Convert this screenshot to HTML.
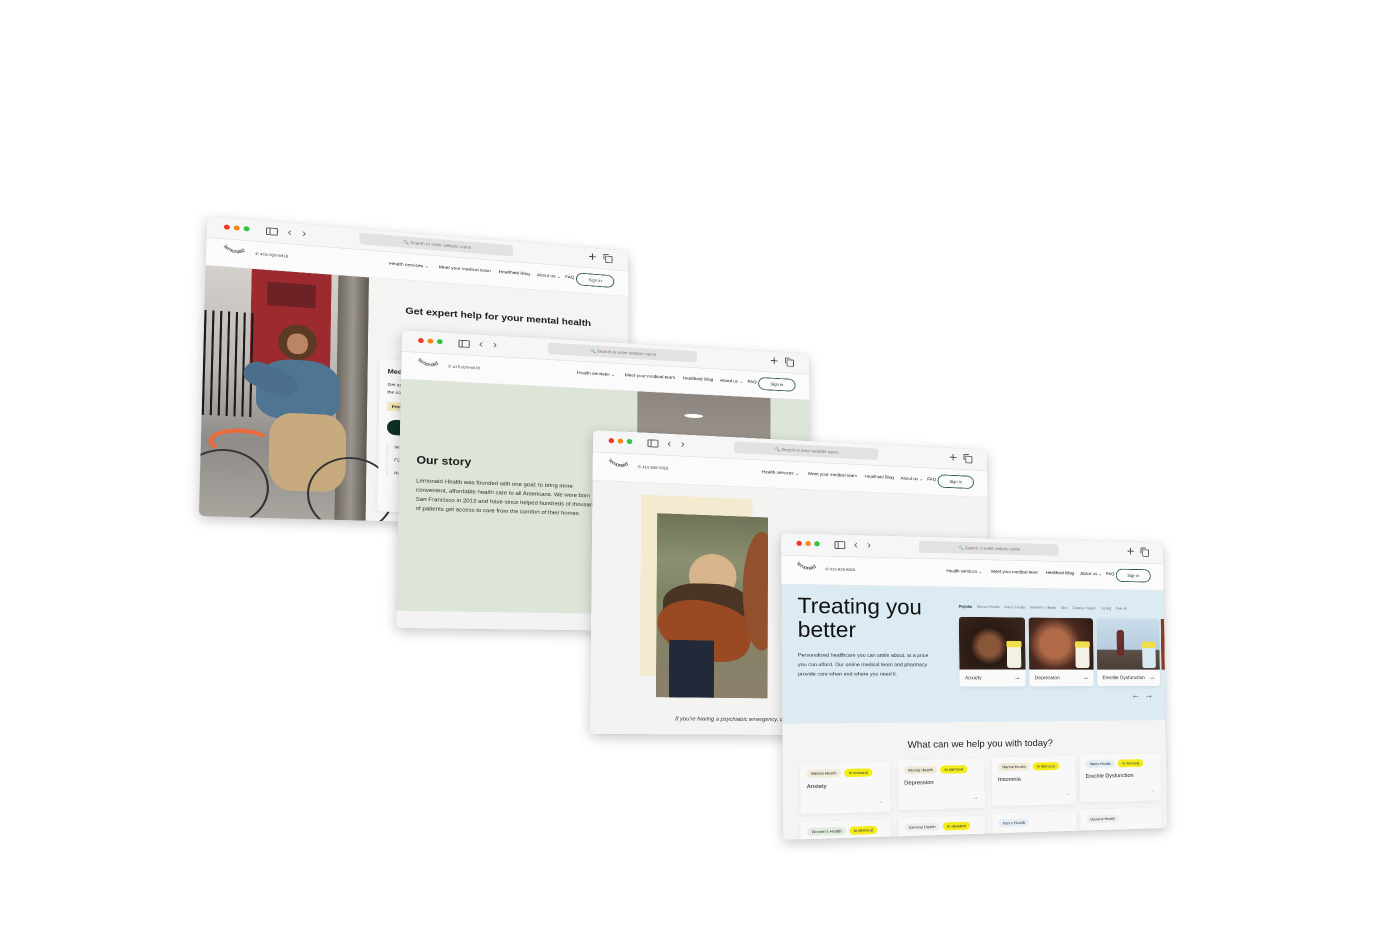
<!DOCTYPE html>
<html><head><meta charset="utf-8">
<style>
html,body{margin:0;padding:0;background:#fff;width:1400px;height:933px;overflow:hidden;font-family:"Liberation Sans",sans-serif;}
.win{position:absolute;left:0;top:0;width:1280px;height:1000px;transform-origin:0 0;border-radius:16px;overflow:hidden;background:#f4f4f3;box-shadow:0 12px 40px rgba(0,0,0,.22),0 0 0 1px rgba(0,0,0,.06);}
.bar{position:absolute;left:0;top:0;width:1280px;height:72px;background:#f6f6f6;border-bottom:2px solid #dcdcdc;}
.dot{position:absolute;top:24px;width:17px;height:17px;border-radius:50%;}
.d1{left:48px;background:#f23a2e}.d2{left:76px;background:#f7871c}.d3{left:104px;background:#2ec43f}
.side{position:absolute;left:168px;top:22px;width:28px;height:20px;border:3px solid #555;border-radius:4px;}
.side:before{content:"";position:absolute;left:7px;top:0;width:3px;height:20px;background:#555}
.chev{position:absolute;top:12px;font-size:36px;color:#555;line-height:40px}
.url{position:absolute;left:440px;top:14px;width:470px;height:40px;background:#e2e2e2;border-radius:10px;font-size:14px;color:#777;text-align:center;line-height:40px}
.plus{position:absolute;left:1150px;top:6px;font-size:46px;color:#444;line-height:50px}
.copy{position:absolute;left:1205px;top:24px;width:18px;height:20px;border:3px solid #555;border-radius:4px}
.copy:after{content:"";position:absolute;left:-9px;top:-9px;width:16px;height:18px;border-left:3px solid #555;border-top:3px solid #555;border-radius:4px 0 0 0}
.nav{position:absolute;left:0;top:74px;width:1280px;height:92px;background:#fbfbfb;border-bottom:2px solid #e7e7e7;}
.logo{position:absolute;left:40px;top:8px}
.phone{position:absolute;left:138px;top:34px;font-size:13px;color:#444}
.nl{position:absolute;top:30px;font-size:15px;color:#222}
.sign{position:absolute;left:1110px;top:20px;width:118px;height:40px;border:3px solid #2b5a47;border-radius:24px;font-size:14px;color:#1c3b2f;text-align:center;line-height:40px}
.content{position:absolute;left:0;top:168px;width:1280px;height:832px;overflow:hidden}
.tag{display:inline-block;padding:6px 14px;border-radius:16px;font-size:13px;color:#333;margin-right:10px}
.g{background:#f1ecd9}.y{background:#f4ec1a}.b{background:#e3eef6}.gr{background:#e2ebe0}.n{background:#eeeeec}
.hc{position:absolute;width:285px;height:165px;background:#f8f8f8;border-radius:8px;box-shadow:0 4px 16px rgba(0,0,0,.06);padding:20px 20px;box-sizing:border-box}
.hc .t{font-size:19px;color:#222;margin-top:18px}
.hc .ar{position:absolute;right:22px;bottom:24px;color:#3a7fd0;font-size:20px}
.pc{position:absolute;top:100px;width:222px;height:235px;background:#fafafa;border-radius:10px;overflow:hidden;box-shadow:0 4px 14px rgba(0,0,0,.08)}
.pc .im{height:178px;position:relative}
.pc .lb{font-size:17px;color:#333;padding:18px 18px;position:relative}
.pc .lb span{position:absolute;right:16px;top:12px;font-size:24px}
.jar{position:absolute;right:14px;bottom:6px;width:48px;height:78px;background:#f3f1e6;border-radius:8px}
.jar:before{content:"";position:absolute;left:-2px;top:-14px;width:52px;height:22px;background:#f1de4e;border-radius:6px}
</style></head>
<body>

<!-- WINDOW 1 -->
<div class="win" id="w1" style="background:#f4f4f3">
  <div class="bar"><div class="dot d1"></div><div class="dot d2"></div><div class="dot d3"></div><div class="side"></div><div class="chev" style="left:230px">‹</div><div class="chev" style="left:272px">›</div><div class="url">🔍 Search or enter website name</div><div class="plus">+</div><div class="copy"></div></div>
  <div class="nav"><svg class="logo" width="90" height="60" viewBox="0 0 90 60"><path id="a1" d="M8,18 Q45,55 82,18" fill="none"/><text font-size="17" font-family="Liberation Sans" fill="#222"><textPath href="#a1">lemonaid</textPath></text></svg><div class="phone">✆ 415-926-5818</div>
  <div class="nl" style="left:530px">Health services ⌄</div><div class="nl" style="left:680px">Meet your medical team</div><div class="nl" style="left:865px">Healthaid Blog</div><div class="nl" style="left:985px">About us ⌄</div><div class="nl" style="left:1075px">FAQ</div><div class="sign">Sign in</div></div>
  <div class="content">
    <div style="position:absolute;left:0;top:0;width:470px;height:832px;background:linear-gradient(180deg,#d4d0cc 0%,#bdb8b3 40%,#8e8b88 70%,#a9a49e 100%)"></div>
    <div style="position:absolute;left:130px;top:0;width:230px;height:330px;background:#9c2a2e"></div>
    <div style="position:absolute;left:175px;top:40px;width:140px;height:80px;background:#6d2226"></div>
    <div style="position:absolute;left:380px;top:0;width:90px;height:832px;background:linear-gradient(90deg,#6c6760,#9c968e,#5d5852)"></div>
    <div style="position:absolute;left:0;top:150px;width:150px;height:350px;background:repeating-linear-gradient(90deg,#1c1c1c 0 6px,transparent 6px 22px)"></div>
    <div style="position:absolute;left:210px;top:180px;width:110px;height:120px;border-radius:50%;background:#5a3a22"></div>
    <div style="position:absolute;left:235px;top:210px;width:60px;height:70px;border-radius:45%;background:#b98564"></div>
    <div style="position:absolute;left:150px;top:300px;width:240px;height:200px;border-radius:40% 40% 30% 30%;background:#4f7593"></div>
    <div style="position:absolute;left:110px;top:330px;width:160px;height:80px;border-radius:40px;background:#4a6e8c;transform:rotate(25deg)"></div>
    <div style="position:absolute;left:190px;top:480px;width:220px;height:260px;border-radius:30%;background:#c7ab7f"></div>
    <div style="position:absolute;left:20px;top:540px;width:150px;height:60px;border:14px solid #e96a3a;border-radius:50%;border-bottom-color:transparent;border-right-color:transparent"></div>
    <div style="position:absolute;left:-60px;top:610px;width:240px;height:240px;border:6px solid #333;border-radius:50%"></div>
    <div style="position:absolute;left:300px;top:620px;width:240px;height:240px;border:6px solid #333;border-radius:50%"></div>
    <div style="position:absolute;left:580px;top:88px;font-size:32px;color:#1d1d1d;font-weight:bold">Get expert help for your mental health</div>
    <div style="position:absolute;left:505px;top:280px;width:320px;height:520px;background:#f9f9f9;border-radius:10px;box-shadow:0 4px 16px rgba(0,0,0,.08);padding:28px 24px;box-sizing:border-box">
      <div style="font-size:22px;font-weight:bold;color:#222">Medical care</div>
      <div style="font-size:15px;color:#333;margin-top:20px;line-height:26px">Get expert care and medication all from the comfort</div>
      <div style="display:inline-block;background:#f2e9b5;padding:8px 14px;font-size:13px;margin-top:20px;font-weight:bold">Price $5</div>
      <div style="background:#0f2f23;color:#fff;border-radius:30px;height:52px;line-height:52px;padding-left:110px;margin-top:30px;font-size:15px">Start</div>
      <div style="font-size:13px;color:#333;margin-top:30px;line-height:22px;border-left:3px solid #dfe8dc;padding-left:20px">Monthly medical<br><br>FDA-approved to you<br><br>No long</div>
    </div>
  </div>
</div>

<!-- WINDOW 2 -->
<div class="win" id="w2" style="background:#dfe6da">
  <div class="bar"><div class="dot d1"></div><div class="dot d2"></div><div class="dot d3"></div><div class="side"></div><div class="chev" style="left:230px">‹</div><div class="chev" style="left:272px">›</div><div class="url">🔍 Search or enter website name</div><div class="plus">+</div><div class="copy"></div></div>
  <div class="nav"><svg class="logo" width="90" height="60" viewBox="0 0 90 60"><path id="a2" d="M8,18 Q45,55 82,18" fill="none"/><text font-size="17" font-family="Liberation Sans" fill="#222"><textPath href="#a2">lemonaid</textPath></text></svg><div class="phone">✆ 415-926-5818</div>
  <div class="nl" style="left:530px">Health services ⌄</div><div class="nl" style="left:680px">Meet your medical team</div><div class="nl" style="left:865px">Healthaid Blog</div><div class="nl" style="left:985px">About us ⌄</div><div class="nl" style="left:1075px">FAQ</div><div class="sign">Sign in</div></div>
  <div class="content" style="background:#dde5d8">
    <div style="position:absolute;left:720px;top:0;width:430px;height:460px;background:linear-gradient(180deg,#8d8680,#a49c94 60%,#c9c1b8)"></div>
    <div style="position:absolute;left:870px;top:70px;width:60px;height:14px;border-radius:50%;background:#fff"></div>
    <div style="position:absolute;left:920px;top:200px;width:50px;height:10px;border-radius:50%;background:#eee"></div>
    <div style="position:absolute;left:50px;top:250px;font-size:36px;font-weight:bold;color:#1d1d1d">Our story</div>
    <div style="position:absolute;left:50px;top:325px;width:560px;font-size:18px;line-height:31px;color:#333">Lemonaid Health was founded with one goal: to bring more convenient, affordable health care to all Americans. We were born in San Francisco in 2013 and have since helped hundreds of thousands of patients get access to care from the comfort of their homes.</div>
    <div style="position:absolute;left:0;top:775px;width:1280px;height:110px;background:#f3f3f2"></div>
  </div>
</div>

<!-- WINDOW 3 -->
<div class="win" id="w3" style="background:#f3f3f2">
  <div class="bar"><div class="dot d1"></div><div class="dot d2"></div><div class="dot d3"></div><div class="side"></div><div class="chev" style="left:230px">‹</div><div class="chev" style="left:272px">›</div><div class="url">🔍 Search or enter website name</div><div class="plus">+</div><div class="copy"></div></div>
  <div class="nav"><svg class="logo" width="90" height="60" viewBox="0 0 90 60"><path id="a3" d="M8,18 Q45,55 82,18" fill="none"/><text font-size="17" font-family="Liberation Sans" fill="#222"><textPath href="#a3">lemonaid</textPath></text></svg><div class="phone">✆ 415-926-5818</div>
  <div class="nl" style="left:530px">Health services ⌄</div><div class="nl" style="left:680px">Meet your medical team</div><div class="nl" style="left:865px">Healthaid Blog</div><div class="nl" style="left:985px">About us ⌄</div><div class="nl" style="left:1075px">FAQ</div><div class="sign">Sign in</div></div>
  <div class="content" style="background:#f3f3f2">
    <div style="position:absolute;left:150px;top:40px;width:350px;height:600px;background:#f3ead0"></div>
    <div style="position:absolute;left:200px;top:100px;width:350px;height:610px;background:linear-gradient(180deg,#6f7358 0%,#8a9070 25%,#7d8464 45%,#8c806c 100%);overflow:hidden">
      <div style="position:absolute;left:100px;top:130px;width:150px;height:150px;border-radius:50%;background:#d7b48b"></div>
      <div style="position:absolute;left:20px;top:230px;width:270px;height:160px;border-radius:40%;background:#4a3426"></div>
      <div style="position:absolute;left:0px;top:290px;width:300px;height:190px;border-radius:50% 40% 40% 50%;background:#9a4a22;transform:rotate(15deg)"></div>
      <div style="position:absolute;left:270px;top:50px;width:120px;height:400px;border-radius:50%;background:#93502c"></div>
      <div style="position:absolute;left:40px;top:420px;width:140px;height:200px;background:#222a3a"></div>
    </div>
    <div style="position:absolute;left:260px;top:770px;font-size:18px;font-style:italic;color:#333">If you're having a psychiatric emergency, call 911 or the National Suicide Prevention Lifeline</div>
  </div>
</div>

<!-- WINDOW 4 -->
<div class="win" id="w4" style="background:#f4f4f3">
  <div class="bar"><div class="dot d1"></div><div class="dot d2"></div><div class="dot d3"></div><div class="side"></div><div class="chev" style="left:230px">‹</div><div class="chev" style="left:272px">›</div><div class="url">🔍 Search or enter website name</div><div class="plus">+</div><div class="copy"></div></div>
  <div class="nav"><svg class="logo" width="90" height="60" viewBox="0 0 90 60"><path id="a4" d="M8,18 Q45,55 82,18" fill="none"/><text font-size="17" font-family="Liberation Sans" fill="#222"><textPath href="#a4">lemonaid</textPath></text></svg><div class="phone">✆ 415-926-5818</div>
  <div class="nl" style="left:530px">Health services ⌄</div><div class="nl" style="left:680px">Meet your medical team</div><div class="nl" style="left:865px">Healthaid Blog</div><div class="nl" style="left:985px">About us ⌄</div><div class="nl" style="left:1075px">FAQ</div><div class="sign">Sign in</div></div>
  <div class="content" style="background:#f4f4f3">
    <div style="position:absolute;left:0;top:0;width:1280px;height:455px;background:#dcebf3"></div>
    <div style="position:absolute;left:50px;top:30px;font-size:72px;line-height:78px;color:#111">Treating you<br>better</div>
    <div style="position:absolute;left:50px;top:215px;width:420px;font-size:17px;line-height:31px;color:#333">Personalized healthcare you can smile about, at a price you can afford. Our online medical team and pharmacy provide care when and where you need it.</div>
    <div style="position:absolute;left:570px;top:58px;font-size:12px;color:#778;word-spacing:2px;white-space:nowrap"><b style="color:#1d3b30">Popular</b>&nbsp;&nbsp; Mental Health &nbsp; Men's Health &nbsp; Women's Health &nbsp; Skin &nbsp; General Health &nbsp; Testing &nbsp; See All</div>
    <div class="pc" style="left:570px"><div class="im" style="background:radial-gradient(circle at 45% 55%,#8a5638 0 22%,#2a1a14 40%,#3a2a22 100%)"><div class="jar"></div></div><div class="lb">Anxiety<span>→</span></div></div>
    <div class="pc" style="left:805px"><div class="im" style="background:radial-gradient(circle at 40% 50%,#b06a48 0 30%,#4a2a20 55%,#2a1812 100%)"><div class="jar"></div></div><div class="lb">Depression<span>→</span></div></div>
    <div class="pc" style="left:1040px"><div class="im" style="background:linear-gradient(180deg,#c9dce9 0%,#b7cde0 60%,#5e5048 62%,#4b3e36 100%)"><div style="position:absolute;left:70px;top:40px;width:26px;height:90px;background:#6a2f2a;border-radius:10px"></div><div class="jar" style="background:#d8e8f0"></div></div><div class="lb">Erectile Dysfunction<span>→</span></div></div>
    <div style="position:absolute;left:1268px;top:100px;width:20px;height:178px;background:#8a3a20"></div>
    <div style="position:absolute;left:1160px;top:350px;font-size:30px;color:#222">←&nbsp; →</div>
    <div style="position:absolute;left:0;top:510px;width:1280px;text-align:center;font-size:32px;color:#1d1d1d">What can we help you with today?</div>
    <div class="hc" style="left:55px;top:585px"><span class="tag g">Mental Health</span><span class="tag y">In demand</span><div class="t">Anxiety</div><div class="ar">→</div></div>
    <div class="hc" style="left:365px;top:580px"><span class="tag g">Mental Health</span><span class="tag y">In demand</span><div class="t">Depression</div><div class="ar">→</div></div>
    <div class="hc" style="left:675px;top:575px"><span class="tag g">Mental Health</span><span class="tag y">In demand</span><div class="t">Insomnia</div><div class="ar">→</div></div>
    <div class="hc" style="left:975px;top:570px"><span class="tag b">Men's Health</span><span class="tag y">In demand</span><div class="t">Erectile Dysfunction</div><div class="ar">→</div></div>
    <div class="hc" style="left:55px;top:775px"><span class="tag gr">Women's Health</span><span class="tag y">In demand</span></div>
    <div class="hc" style="left:365px;top:770px"><span class="tag n">General Health</span><span class="tag y">In demand</span></div>
    <div class="hc" style="left:675px;top:765px"><span class="tag b">Men's Health</span></div>
    <div class="hc" style="left:975px;top:760px"><span class="tag n">General Health</span></div>
  </div>
</div>

<script>
function solve(A,b){var n=b.length;for(var i=0;i<n;i++){var m=i;for(var r=i+1;r<n;r++)if(Math.abs(A[r][i])>Math.abs(A[m][i]))m=r;var t=A[i];A[i]=A[m];A[m]=t;t=b[i];b[i]=b[m];b[m]=t;for(var r=i+1;r<n;r++){var f=A[r][i]/A[i][i];for(var c=i;c<n;c++)A[r][c]-=f*A[i][c];b[r]-=f*b[i];}}var x=new Array(n);for(var i=n-1;i>=0;i--){var s=b[i];for(var c=i+1;c<n;c++)s-=A[i][c]*x[c];x[i]=s/A[i][i];}return x;}
function place(id,pts){var w=1280,h=1000,src=[[0,0],[w,0],[w,h],[0,h]],A=[],b=[];
for(var i=0;i<4;i++){var sx=src[i][0],sy=src[i][1],dx=pts[i][0],dy=pts[i][1];
A.push([sx,sy,1,0,0,0,-sx*dx,-sy*dx]);b.push(dx);A.push([0,0,0,sx,sy,1,-sx*dy,-sy*dy]);b.push(dy);}
var H=solve(A,b);
document.getElementById(id).style.transform="matrix3d("+[H[0],H[3],0,H[6],H[1],H[4],0,H[7],0,0,1,0,H[2],H[5],0,1].join(",")+")";}
place("w1",[[207,216],[628,251],[630,528],[199,516]]);
place("w2",[[402,330],[809,354],[811,633],[396,628]]);
place("w3",[[593,430],[987,450],[989,736],[590,734]]);
place("w4",[[781,533],[1163,543],[1167,828],[783,840]]);
</script>
</body></html>
